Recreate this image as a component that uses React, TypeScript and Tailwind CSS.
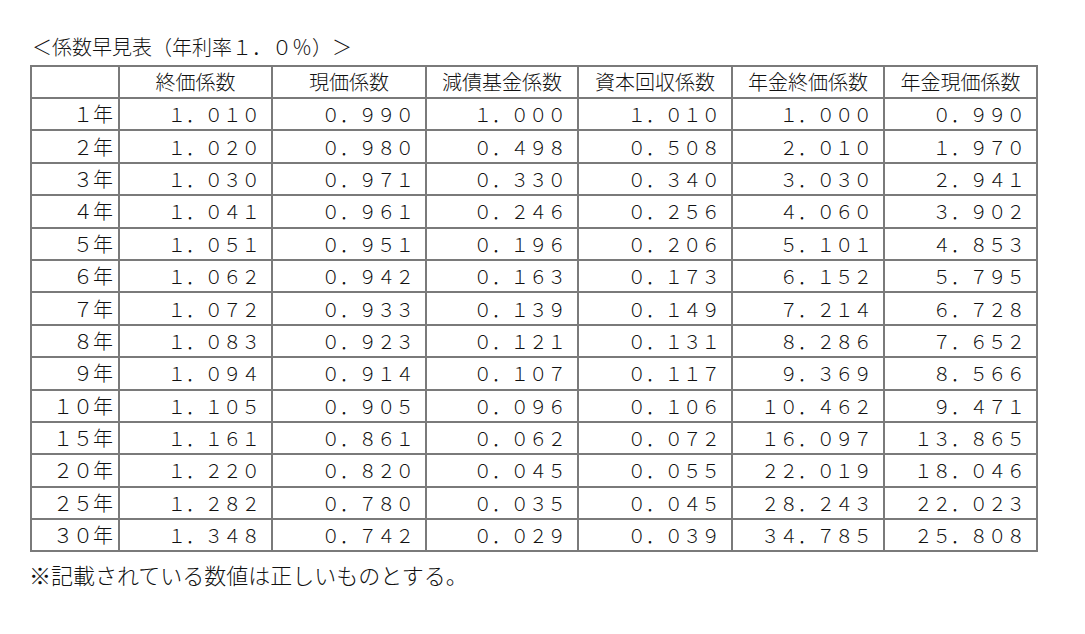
import React from "react";

const rows: string[][] = [
  ["1年", "1.010", "0.990", "1.000", "1.010", "1.000", "0.990"],
  ["2年", "1.020", "0.980", "0.498", "0.508", "2.010", "1.970"],
  ["3年", "1.030", "0.971", "0.330", "0.340", "3.030", "2.941"],
  ["4年", "1.041", "0.961", "0.246", "0.256", "4.060", "3.902"],
  ["5年", "1.051", "0.951", "0.196", "0.206", "5.101", "4.853"],
  ["6年", "1.062", "0.942", "0.163", "0.173", "6.152", "5.795"],
  ["7年", "1.072", "0.933", "0.139", "0.149", "7.214", "6.728"],
  ["8年", "1.083", "0.923", "0.121", "0.131", "8.286", "7.652"],
  ["9年", "1.094", "0.914", "0.107", "0.117", "9.369", "8.566"],
  ["10年", "1.105", "0.905", "0.096", "0.106", "10.462", "9.471"],
  ["15年", "1.161", "0.861", "0.062", "0.072", "16.097", "13.865"],
  ["20年", "1.220", "0.820", "0.045", "0.055", "22.019", "18.046"],
  ["25年", "1.282", "0.780", "0.035", "0.045", "28.243", "22.023"],
  ["30年", "1.348", "0.742", "0.029", "0.039", "34.785", "25.808"],
];

const headers = ["終価係数", "現価係数", "減債基金係数", "資本回収係数", "年金終価係数", "年金現価係数"];

const fw = (s: string) =>
  s.replace(/[0-9.]/g, (c) => (c === "." ? "．" : String.fromCharCode(c.charCodeAt(0) + 0xfee0)));

const colW = ["w-[88px]", "w-[153px]", "w-[154px]", "w-[152px]", "w-[154px]", "w-[152px]", "w-[153px]"];

export default function App() {
  return (
    <div
      className="w-[1085px] h-[634px] bg-white text-[#111] pl-[30px] pt-[34px] font-light"
      style={{ fontFamily: '"Noto Sans CJK JP", "Noto Sans", sans-serif' }}
    >
      <div className="text-[20px] leading-[26px] h-[31px] pl-[2px]">＜係数早見表（年利率１．０％）＞</div>
      <table className="border-collapse table-fixed text-[20px] leading-[24px] border-2 border-[#5a5a5a]">
        <colgroup>
          {colW.map((w, i) => (
            <col key={i} className={w} />
          ))}
        </colgroup>
        <thead>
          <tr className="h-[32px]">
            <th className="border-2 border-[#7a7a7a] font-light"></th>
            {headers.map((h) => (
              <th key={h} className="border-2 border-[#7a7a7a] font-light text-center p-0">
                {h}
              </th>
            ))}
          </tr>
        </thead>
        <tbody>
          {rows.map((r) => (
            <tr key={r[0]} className="h-[32.4px]">
              {r.map((c, i) => (
                <td
                  key={i}
                  className={
                    "border-2 border-[#7a7a7a] text-right p-0 whitespace-nowrap " +
                    (i === 0 ? "pr-[5px]" : "pr-[11px] text-[18.5px]")
                  }
                >
                  {fw(c)}
                </td>
              ))}
            </tr>
          ))}
        </tbody>
      </table>
      <div className="text-[22px] leading-[26px] mt-[9px] -ml-[1px]">※記載されている数値は正しいものとする。</div>
    </div>
  );
}
